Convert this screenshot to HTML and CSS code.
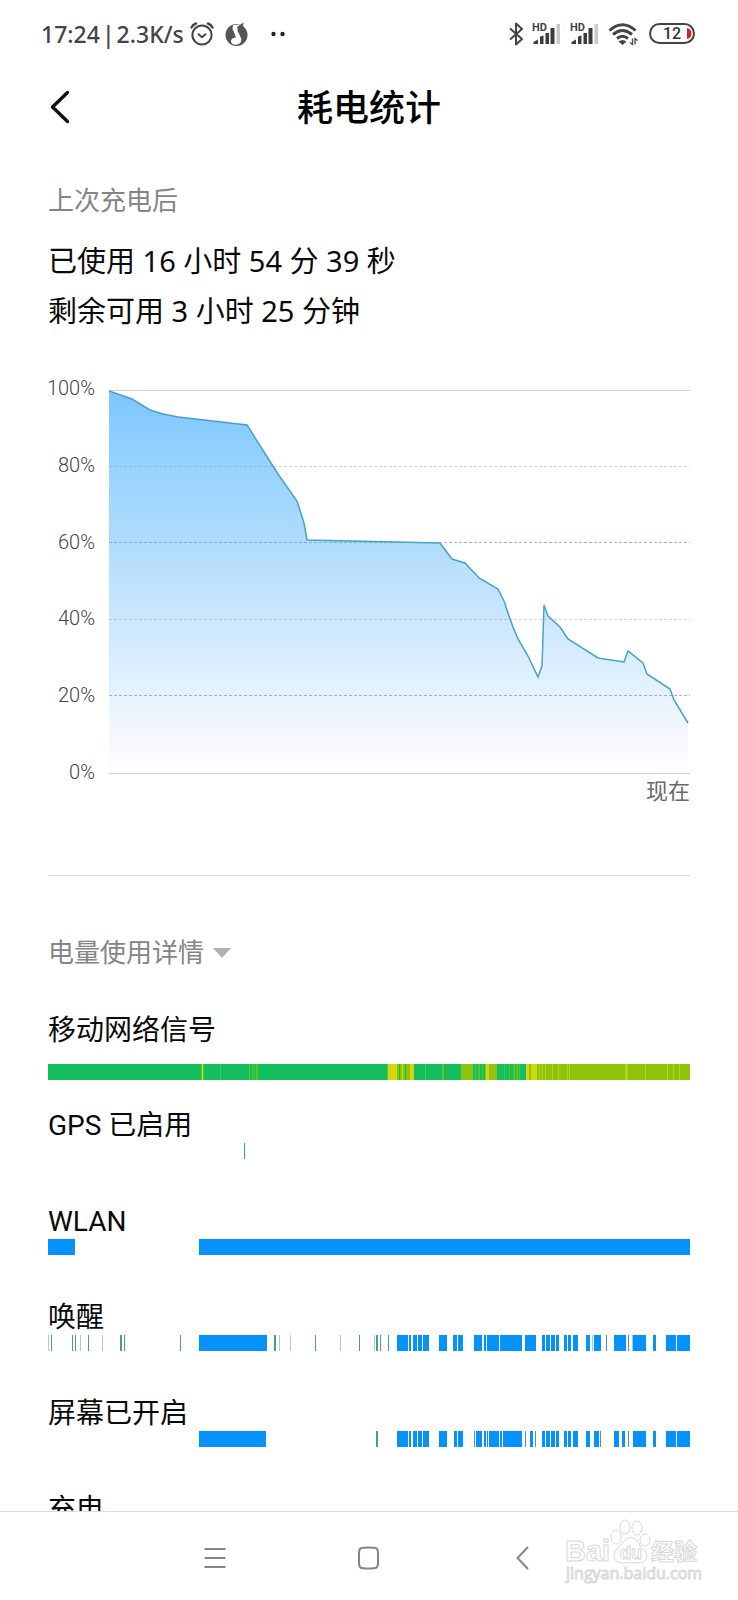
FILE: index.html
```html
<!DOCTYPE html>
<html lang="zh-CN">
<head>
<meta charset="utf-8">
<meta name="viewport" content="width=device-width, initial-scale=1">
<title>耗电统计</title>
<link rel="stylesheet" href="styles.css">
</head>
<body class="screen">
<div class="status">
  <div class="status-left">
    <div class="clock"><span>17:24</span><span>|</span><span>2.3K/s</span></div>
    <svg class="icon" width="24" height="24" viewBox="0 0 24 24" fill="none" stroke="#444" stroke-width="2" stroke-linecap="round" stroke-linejoin="round"><circle cx="12" cy="13" r="9.6"/><path d="M8.500 12.200l3.500 3 3.500-3"/><path d="M1.500 5.500Q3 2.600 6 1.500M22.500 5.500Q21 2.600 18 1.500" stroke-width="2.400"/></svg>
    <svg class="icon music" width="23" height="24" viewBox="0 0 23 24"><circle cx="11.500" cy="13" r="11" fill="#555"/><path d="M8 3L15 2.500l-2.500 6 2.800 6q2.200 4.500-.8 7-3.500 2.300-7 .5-2.500-2-1-4.500 1.500-2.200 4.500-2L8.500 9l-1-2z" fill="#fff"/><path d="M12 5L18.500 .5l-.5 4-4.500 5.500z" fill="#555"/></svg>
    <svg class="icon" width="14" height="6" viewBox="0 0 14 6" fill="#222"><circle cx="2.500" cy="3" r="2.200"/><circle cx="11.500" cy="3" r="2.200"/></svg>
  </div>
  <div class="status-right">
    <svg class="icon" width="14" height="24" viewBox="0 0 14 24" fill="none" stroke="#444" stroke-width="2" stroke-linejoin="round"><path d="M1 6.500l12 10.500-6 5.500v-21l6 5.500L1 17.500"/></svg>
    <svg class="icon" width="29" height="24" viewBox="0 0 29 24"><text class="hd" x="0" y="9">HD</text><path d="M1.500 22v-2l4.500-2.500V22zM8 22v-7.500l3.500-1V22zM13.500 22V11h3.500v11zM18.500 22V6h4v16z" fill="#3c3c3c"/><path d="M24.500 2H28v20h-3.500z" fill="#c9c9c9"/></svg>
    <svg class="icon" width="29" height="24" viewBox="0 0 29 24"><text class="hd" x="0" y="9">HD</text><path d="M1.500 22v-2l4.500-2.500V22zM8 22v-7.500l3.500-1V22zM13.500 22V11h3.500v11zM18.500 22V6h4v16z" fill="#3c3c3c"/><path d="M24.500 2H28v20h-3.500z" fill="#c9c9c9"/></svg>
    <svg class="icon" width="32" height="24" viewBox="0 0 32 24" fill="none" stroke="#444"><path d="M1.500 8.500Q14.500-3 27.500 8.500M5 12.500q9.500-8 19 0M9 16.500q5.500-4.500 11 0" stroke-width="3"/><path d="M10.500 19.500q4-3 8 0l-4 3.500z" fill="#444" stroke="none"/><path d="M24.500 16.500v6l-2.500-2M27 22.500v-6l2.500 2" stroke-width="1.300"/></svg>
    <svg class="icon" width="46" height="22" viewBox="0 0 46 22"><rect x="1" y="1" width="44" height="19" rx="9.500" fill="#fff" stroke="#444" stroke-width="2"/><path d="M38 5q4.500 1 4.500 5.500T38 16z" fill="#d2232a"/><text class="charge" x="23" y="16" text-anchor="middle">12</text></svg>
  </div>
</div>
<header class="header">
  <button class="back" aria-label="返回"><svg class="icon" width="20" height="34" viewBox="0 0 20 34" fill="none" stroke="#111" stroke-width="3.400" stroke-linecap="round" stroke-linejoin="round"><path d="M17.500 2.500L2.500 17l15 14.500"/></svg></button>
  <h1 class="title">耗电统计</h1>
</header>
<main class="content">
  <section>
    <h2 class="caption">上次充电后</h2>
    <div class="summary">
      <p>已使用 16 小时 54 分 39 秒</p>
      <p>剩余可用 3 小时 25 分钟</p>
    </div>
    <div class="chart">
      <div class="axis"><span>100%</span><span>80%</span><span>60%</span><span>40%</span><span>20%</span><span>0%</span></div>
      <div class="plot">
        <svg class="graph" viewBox="0 0 581 384" preserveAspectRatio="none" role="img" aria-label="电量曲线">
          <defs><linearGradient id="level" x1="0" y1="0" x2="0" y2="1"><stop offset="0" stop-color="#7cc6ff"/><stop offset=".2" stop-color="#98d3fe"/><stop offset=".4" stop-color="#b0dcfc"/><stop offset=".6" stop-color="#cce7fe"/><stop offset=".8" stop-color="#e6f3fe"/><stop offset=".9" stop-color="#f4f7fd"/><stop offset="1" stop-color="#fff"/></linearGradient></defs>
          <path class="rule" d="M0 .5H581M0 383.500H581"/>
          <path fill="url(#level)" d="M0 1L23 9 41 20 54 24 69 27 138 35 162 73 169 84 188 111 195 133 198 150 331 153 343 169 356 173 370 188 389 199 395 211 400 226 404 237 409 249 419 266 429 287 433 276 435 215 439 226 451 237 459 249 489 268 515 272 519 261 534 273 538 284 561 299 565 310 579 333V383H0z"/>
          <path class="dash" d="M0 76.500H581M0 229.500H581"/>
          <path class="dash strong" d="M0 152.500H581M0 305.500H581"/>
          <path class="curve" d="M0 1L23 9 41 20 54 24 69 27 138 35 162 73 169 84 188 111 195 133 198 150 331 153 343 169 356 173 370 188 389 199 395 211 400 226 404 237 409 249 419 266 429 287 433 276 435 215 439 226 451 237 459 249 489 268 515 272 519 261 534 273 538 284 561 299 565 310 579 333"/>
        </svg>
        <span class="now">现在</span>
      </div>
    </div>
  </section>
  <hr class="divider">
  <section>
    <button class="caption toggle">电量使用详情<svg class="icon" width="18" height="10" viewBox="0 0 18 10"><path d="M0 0h18L9 10z" fill="#b0b0b0"/></svg></button>
    <div class="row signal">
      <h3 class="label">移动网络信号</h3>
      <svg class="strip" viewBox="0 0 642 16" preserveAspectRatio="none">
        <path stroke="#13be5f" d="M0 8h642"/>
        <path stroke="#5ac728" d="M153 8h3M172 8h1M201 8h1M204 8h1M206 8h1M208 8h2M339 8h1M377 8h1M394 8h2M427 8h1M430 8h2M434 8h1M456 8h1M461 8h1M465 8h2M468 8h2M471 8h1"/>
        <path stroke="#8fc30a" d="M349 8h2M352 8h2M355 8h2M358 8h4M413 8h12M437 8h12M478 8h164"/>
        <path stroke="#d2d90a" d="M154 8h1M340 8h9M354 8h1M362 8h4M438 8h3M478 8h3M483 8h6"/>
        <path stroke="#b4d21c" d="M491 8h1M494 8h1M497 8h1M504 8h1M510 8h1M519 8h1M521 8h1M577 8h3M597 8h1M619 8h1M625 8h1M631 8h1"/>
      </svg>
    </div>
    <div class="row">
      <h3 class="label">GPS 已启用</h3>
      <svg class="strip" viewBox="0 0 642 16" preserveAspectRatio="none"><path stroke="#2f9bc8" d="M196 8h1"/></svg>
    </div>
    <div class="row">
      <h3 class="label">WLAN</h3>
      <svg class="strip" viewBox="0 0 642 16" preserveAspectRatio="none"><path stroke="#0593fb" d="M0 8h27M151 8h491"/></svg>
    </div>
    <div class="row">
      <h3 class="label">唤醒</h3>
      <svg class="strip" viewBox="0 0 642 16" preserveAspectRatio="none">
        <path stroke="#a3cfd3" d="M0 8h1M32 8h1M54 8h1M231 8h1M242 8h1M292 8h1M326 8h1M544 8h1M584 8h1"/>
        <path stroke="#4e96a4" d="M3 8h1M24 8h1M27 8h1M40 8h1M72 8h2M76 8h1M132 8h1M226 8h2M267 8h1M311 8h1M328 8h2M332 8h1M340 8h1M558 8h1M580 8h1"/>
        <path stroke="#0593fb" d="M151 8h68M349 8h11M361 8h2M365 8h4M370 8h4M375 8h6M391 8h8M405 8h4M410 8h5M426 8h8M436 8h2M439 8h12M452 8h22M477 8h11M494 8h3M498 8h4M503 8h4M508 8h3M516 8h3M520 8h3M525 8h5M538 8h4M546 8h7M566 8h12M585 8h13M605 8h3M618 8h10M629 8h13"/>
      </svg>
    </div>
    <div class="row">
      <h3 class="label">屏幕已开启</h3>
      <svg class="strip" viewBox="0 0 642 16" preserveAspectRatio="none">
        <path stroke="#4e96a4" d="M328 8h2M426 8h1M477 8h1M487 8h1M552 8h1M580 8h1"/>
        <path stroke="#0593fb" d="M151 8h67M349 8h11M361 8h2M365 8h4M370 8h4M375 8h6M391 8h8M406 8h3M410 8h5M428 8h6M436 8h2M439 8h1M441 8h10M452 8h2M455 8h19M482 8h3M494 8h3M498 8h4M503 8h4M508 8h3M516 8h3M520 8h3M525 8h5M538 8h4M546 8h5M566 8h5M574 8h3M585 8h13M605 8h3M618 8h10M629 8h13"/>
      </svg>
    </div>
    <div class="row">
      <h3 class="label">充电</h3>
      <svg class="strip" viewBox="0 0 642 16" preserveAspectRatio="none"></svg>
    </div>
  </section>
</main>
<nav class="nav">
  <button class="nav-item" aria-label="菜单"><svg class="icon" width="22" height="24" viewBox="0 0 22 24" stroke="#858585" stroke-width="2"><path d="M.5 3h21M.5 12h21M.5 21h21"/></svg></button>
  <button class="nav-item" aria-label="主页"><svg class="icon" width="22" height="24" viewBox="0 0 22 24" fill="none" stroke="#858585" stroke-width="2"><path d="M10.500 1.500c8.500 0 9.500.5 9.500 6v9c0 5.500-1 6-9.500 6s-9.500-.5-9.500-6v-9c0-5.500 1-6 9.500-6z"/></svg></button>
  <button class="nav-item" aria-label="后退"><svg class="icon" width="22" height="24" viewBox="0 0 22 24" fill="none" stroke="#858585" stroke-width="2"><path d="M16 1L5.500 12 16 23"/></svg></button>
  <svg class="mark" width="140" height="68" viewBox="0 0 140 68" fill="#fff" stroke="#d8d8d8">
    <text class="mark-bai" x="1" y="43">Bai</text>
    <text class="mark-cn" x="87" y="42">经验</text>
    <ellipse cx="52" cy="19" rx="5" ry="7"/><ellipse cx="61" cy="9" rx="5" ry="7"/><ellipse cx="73" cy="10" rx="5" ry="7"/><ellipse cx="81" cy="22" rx="5" ry="6"/>
    <path d="M60 23q7-7 13 0l4 6q6 4 6 9-1 7-8 7-8-1-17 0-8-1-8-7 0-5 5-9z"/>
    <text class="mark-du" x="56" y="41">du</text>
    <text class="mark-url" x="2" y="61">jingyan.baidu.com</text>
  </svg>
</nav>
</body>
</html>
```
FILE: styles.css
```css
* { box-sizing: border-box; margin: 0; }

.screen {
  display: flex;
  flex-direction: column;
  height: 100vh;
  background: #fff;
  color: #0a0a0a;
  font-family: Roboto, "Noto Sans CJK SC", sans-serif;
}

button {
  border: 0;
  padding: 0;
  background: none;
  font: inherit;
  color: inherit;
}

.icon { display: block; flex: none; }

.status {
  display: flex;
  flex: none;
  justify-content: space-between;
  height: 68px;
  padding: 0 43px 0 41px;
  color: #444;
  font-family: "Noto Sans", sans-serif;
  font-size: 23px;
  font-weight: 500;
}

.status-left, .status-right { display: flex; align-items: center; }
.status-left { gap: 6px; }
.status-right { gap: 9px; }
.clock { display: flex; gap: 2px; }
.music { margin: 0 17px 0 5px; }

.hd { font: 700 11px Roboto, sans-serif; fill: #444; }
.charge { font: 500 16px Roboto, sans-serif; fill: #333; }

.header {
  display: grid;
  grid-template-columns: 1fr auto 1fr;
  align-items: center;
  flex: none;
  height: 77px;
  padding: 0 50px;
}

.back { justify-self: start; }

.title {
  padding-top: 4px;
  font-size: 36px;
  font-weight: 500;
  line-height: 48px;
  color: #000;
}

.content {
  flex: 1;
  min-height: 0;
  overflow-y: auto;
  scrollbar-width: none;
  padding: 38px 48px 0;
}

.caption {
  font-size: 26px;
  font-weight: 400;
  line-height: 36px;
  color: #858585;
}

.summary {
  margin-top: 17px;
  font-family: "Noto Sans", "Noto Sans CJK SC", sans-serif;
  font-size: 29px;
  line-height: 50px;
}

.chart {
  display: grid;
  grid-template-columns: 47px 1fr;
  gap: 14px;
  align-items: start;
  margin-top: 40px;
  color: #6a6a6a;
}

.axis {
  display: flex;
  flex-direction: column;
  justify-content: space-between;
  align-items: flex-end;
  height: 408px;
  color: #444;
  font-size: 20px;
  font-weight: 300;
  line-height: 24px;
}

.plot {
  display: flex;
  flex-direction: column;
  align-items: flex-end;
  padding-top: 14px;
}

.graph { display: block; width: 100%; height: 384px; }
.graph path { vector-effect: non-scaling-stroke; }
.rule { stroke: #d2d2d2; }
.dash { stroke: #7a9aa8; stroke-opacity: .4; stroke-dasharray: 3 2; }
.strong { stroke-opacity: .7; }
.curve { fill: none; stroke: #45a3c8; stroke-width: 1.5; }

.now { font-size: 22px; line-height: 36px; }

.divider {
  height: 1px;
  margin: 65px 0 59px;
  border: 0;
  background: #dedede;
}

.toggle {
  display: flex;
  align-items: center;
  gap: 9px;
  margin-bottom: 41px;
}

.row { padding-bottom: 44px; }
.signal { display: grid; gap: 16px; padding-bottom: 27px; }

.label {
  padding-top: 2px;
  font-size: 28px;
  font-weight: 400;
  line-height: 34px;
}

.strip {
  display: block;
  width: 100%;
  height: 16px;
  stroke-width: 16;
  shape-rendering: crispEdges;
}

.nav {
  position: relative;
  display: flex;
  flex: none;
  justify-content: center;
  height: 89px;
  padding-top: 4px;
  border-top: 1px solid #dcdcdc;
}

.nav-item {
  display: flex;
  align-items: center;
  justify-content: center;
  width: 154px;
}

.mark { position: absolute; right: 34px; bottom: 14px; }
.mark-bai { font: 700 29px "Liberation Sans", sans-serif; }
.mark-cn { font: 700 23px "Noto Sans CJK SC", sans-serif; }
.mark-du { font: 700 18px "Liberation Sans", sans-serif; }
.mark-url { font: 400 16px "Open Sans", sans-serif; }
```
